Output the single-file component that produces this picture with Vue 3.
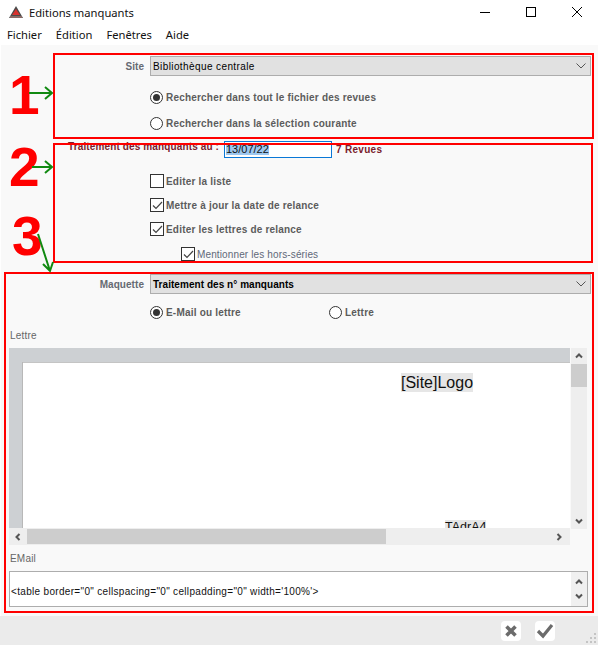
<template>
  <div class="window">
    <header class="titlebar">
      <svg class="app-icon" width="16" height="14" viewBox="0 0 16 14">
        <path d="M8 1 L15 13 H1 Z" fill="#4a4a4a" />
        <path d="M8 4 L12 10 H4 Z" fill="#d8322e" />
        <path d="M2 11 H14 V13 H2 Z" fill="#8a6a66" />
      </svg>
      <span class="title">Editions manquants</span>
      <div class="win-buttons">
        <svg width="12" height="12" viewBox="0 0 12 12"><path d="M1 6.5 H11" stroke="#000" fill="none" /></svg>
        <svg width="12" height="12" viewBox="0 0 12 12"><rect x="1.5" y="1.5" width="9" height="9" stroke="#000" fill="none" /></svg>
        <svg width="12" height="12" viewBox="0 0 12 12"><path d="M1 1 L11 11 M11 1 L1 11" stroke="#000" fill="none" /></svg>
      </div>
    </header>

    <nav class="menubar">
      <span v-for="item in menu" :key="item">{{ item }}</span>
    </nav>

    <main class="content">
      <div class="field-row site-row">
        <label class="field-label">Site</label>
        <div class="select">
          <span>Bibliothèque centrale</span>
          <svg width="10" height="6" viewBox="0 0 10 6"><path d="M0.5 0.5 L5 5 L9.5 0.5" stroke="#555" fill="none" /></svg>
        </div>
      </div>

      <div class="options site-options">
        <div class="option"><span class="radio on"></span>Rechercher dans tout le fichier des revues</div>
        <div class="option"><span class="radio"></span>Rechercher dans la sélection courante</div>
      </div>

      <div class="date-row">
        <span class="date-label">Traitement des manquants au :</span>
        <div class="date-input"><span>13/07/22</span></div>
        <span class="count">7 Revues</span>
      </div>

      <div class="checks">
        <div v-for="c in checks" :key="c.label" class="option">
          <span class="checkbox">
            <svg v-if="c.on" width="11" height="9" viewBox="0 0 11 9"><path d="M1 4.5 L4 7.5 L10 1" stroke="#444" stroke-width="1.2" fill="none" /></svg>
          </span>{{ c.label }}
        </div>
        <div class="option sub-option">
          <span class="checkbox">
            <svg width="11" height="9" viewBox="0 0 11 9"><path d="M1 4.5 L4 7.5 L10 1" stroke="#444" stroke-width="1.2" fill="none" /></svg>
          </span>Mentionner les hors-séries
        </div>
      </div>

      <div class="field-row maquette-row">
        <label class="field-label">Maquette</label>
        <div class="select strong">
          <span>Traitement des n° manquants</span>
          <svg width="10" height="6" viewBox="0 0 10 6"><path d="M0.5 0.5 L5 5 L9.5 0.5" stroke="#555" fill="none" /></svg>
        </div>
      </div>

      <div class="type-row">
        <div class="option type-a"><span class="radio on"></span>E-Mail ou lettre</div>
        <div class="option"><span class="radio"></span>Lettre</div>
      </div>

      <div class="section-label">Lettre</div>
      <div class="letter">
        <div class="letter-main">
          <div class="ruler-top"></div>
          <div class="letter-body">
            <div class="ruler-left"></div>
            <div class="page">
              <span class="tag tag-logo">[Site]Logo</span>
              <span class="tag tag-adr">TAdrA4</span>
            </div>
          </div>
          <div class="hscroll">
            <svg class="arrow" width="8" height="8" viewBox="0 0 8 8"><path d="M5.5 1 L2.5 4 L5.5 7" stroke="#555" stroke-width="2" fill="none" /></svg>
            <div class="htrack"><div class="hthumb"></div></div>
            <svg class="arrow" width="8" height="8" viewBox="0 0 8 8"><path d="M2.5 1 L5.5 4 L2.5 7" stroke="#555" stroke-width="2" fill="none" /></svg>
          </div>
        </div>
        <div class="vscroll">
          <svg class="arrow" width="8" height="8" viewBox="0 0 8 8"><path d="M1 5.5 L4 2.5 L7 5.5" stroke="#555" stroke-width="2" fill="none" /></svg>
          <div class="vtrack"><div class="vthumb"></div></div>
          <svg class="arrow" width="8" height="8" viewBox="0 0 8 8"><path d="M1 2.5 L4 5.5 L7 2.5" stroke="#555" stroke-width="2" fill="none" /></svg>
        </div>
      </div>

      <div class="section-label email-label">EMail</div>
      <div class="email">
        <div class="email-text">&lt;table border="0" cellspacing="0" cellpadding="0" width='100%'&gt;</div>
        <div class="email-scroll">
          <svg width="8" height="8" viewBox="0 0 8 8"><path d="M1 5.5 L4 2.5 L7 5.5" stroke="#555" stroke-width="2" fill="none" /></svg>
          <svg width="8" height="8" viewBox="0 0 8 8"><path d="M1 2.5 L4 5.5 L7 2.5" stroke="#555" stroke-width="2" fill="none" /></svg>
        </div>
      </div>
    </main>

    <footer class="footer">
      <button class="tool-btn">
        <svg width="14" height="14" viewBox="0 0 14 14"><path d="M2.5 2.5 L11.5 11.5 M11.5 2.5 L2.5 11.5" stroke="#6b6b6b" stroke-width="3.6" fill="none" /></svg>
      </button>
      <button class="tool-btn">
        <svg width="18" height="16" viewBox="0 0 18 16"><path d="M2 8 L7 13 L16 2" stroke="#6b6b6b" stroke-width="3.2" fill="none" /></svg>
      </button>
      <svg class="grip" width="14" height="14" viewBox="0 0 14 14">
        <g fill="#c4c4c4">
          <rect x="10" y="2" width="2" height="2" /><rect x="6" y="6" width="2" height="2" /><rect x="10" y="6" width="2" height="2" />
          <rect x="2" y="10" width="2" height="2" /><rect x="6" y="10" width="2" height="2" /><rect x="10" y="10" width="2" height="2" />
        </g>
      </svg>
    </footer>

    <!-- red annotations drawn over the screenshot -->
    <div class="mark box1"></div>
    <div class="mark box2"></div>
    <div class="mark box3"></div>
    <span class="num num1">1</span>
    <span class="num num2">2</span>
    <span class="num num3">3</span>
    <svg class="arrows" width="60" height="290" viewBox="0 0 60 290">
      <g stroke="#118a11" stroke-width="2" fill="none">
        <path d="M29 93 H52 M45 87 L52 93 L45 99" />
        <path d="M32 167 H52 M45 161 L52 167 L45 173" />
        <path d="M38 234 L50 271 M43 264 L50 271 L53 262" />
      </g>
    </svg>
  </div>
</template>

<script setup>
const menu = ['Fichier', 'Édition', 'Fenêtres', 'Aide']
const checks = [
  { label: 'Editer la liste', on: false },
  { label: 'Mettre à jour la date de relance', on: true },
  { label: 'Editer les lettres de relance', on: true }
]
</script>

<style>
html, body { margin: 0; background: #fff; }
</style>

<style scoped>
.window {
  position: relative;
  width: 598px;
  height: 645px;
  overflow: hidden;
  background: #fff;
  font-family: "Liberation Sans", Arial, sans-serif;
  font-size: 10px;
  color: #5c5c5c;
}

.titlebar {
  height: 24px;
  display: flex;
  align-items: center;
  padding-left: 8px;
}
.title {
  margin-left: 5px;
  font-family: "Noto Sans", sans-serif;
  font-size: 11.2px;
  color: #111;
}
.win-buttons {
  margin-left: auto;
  display: flex;
  gap: 34px;
  padding-right: 15px;
}

.menubar {
  height: 21px;
  display: flex;
  gap: 14px;
  padding-left: 7px;
  align-items: center;
  font-family: "Noto Sans", sans-serif;
  font-size: 11.2px;
  color: #111;
}

.content {
  height: 571px;
  margin-left: 1px;
  background: #f9f9f9;
  box-sizing: border-box;
  padding-top: 11px;
}

.field-row {
  display: flex;
  align-items: center;
  height: 20px;
}
.field-label {
  width: 143px;
  text-align: right;
  font-weight: bold;
  letter-spacing: 0.05px;
  color: #666a72;
}
.select {
  margin-left: 6px;
  width: 441px;
  height: 20px;
  box-sizing: border-box;
  background: #e1e1e1;
  border: 1px solid #adadad;
  display: flex;
  align-items: center;
  justify-content: space-between;
  padding: 0 4px 0 2px;
  color: #000;
  letter-spacing: 0.4px;
}
.select.strong { font-weight: bold; letter-spacing: 0.05px; }

.option {
  display: flex;
  align-items: center;
  font-weight: bold;
  letter-spacing: 0.2px;
  color: #5c5c5c;
  white-space: nowrap;
}
.radio {
  width: 11px;
  height: 11px;
  border: 1px solid #333;
  border-radius: 50%;
  margin-right: 3px;
  background: #fff;
  position: relative;
  flex: none;
}
.radio.on::after {
  content: "";
  position: absolute;
  left: 2px;
  top: 2px;
  width: 7px;
  height: 7px;
  border-radius: 50%;
  background: #333;
}
.checkbox {
  width: 12px;
  height: 12px;
  border: 1px solid #333;
  background: #fff;
  margin-right: 2px;
  display: flex;
  align-items: center;
  justify-content: center;
  flex: none;
}

.site-options {
  margin: 8px 0 0 149px;
}
.site-options .option { height: 26px; }

.date-row {
  margin-top: 5px;
  height: 17px;
  display: flex;
  align-items: flex-start;
  font-weight: bold;
  letter-spacing: 0.2px;
  color: #7a1c2c;
}
.date-label {
  margin: 0 0 0 67px;
  width: 156px;
  letter-spacing: 0.13px;
  white-space: nowrap;
}
.date-input {
  width: 108px;
  height: 17px;
  box-sizing: border-box;
  background: #fff;
  border: 1px solid #0a78d7;
  padding: 1px 1px 0;
  font-weight: normal;
  color: #111;
  letter-spacing: 0;
  font-size: 11px;
  line-height: 13px;
}
.date-input span { background: #9cc7ef; }
.count { margin: 3px 0 0 4px; letter-spacing: 0.3px; }

.checks {
  margin: 11px 0 0 149px;
}
.checks .option { height: 24px; }
.checks .sub-option {
  height: 26px;
  margin-left: 31px;
  font-weight: normal;
  color: #5f6878;
  letter-spacing: 0.13px;
}

.maquette-row { margin-top: 7px; }

.type-row {
  margin: 8px 0 0 149px;
  height: 20px;
  display: flex;
  align-items: center;
}
.type-a { width: 179px; }

.section-label {
  margin: 7px 0 0 9px;
  height: 14px;
  line-height: 14px;
  letter-spacing: 0.2px;
  color: #666;
}

.letter {
  margin: 5px 0 0 8px;
  width: 578px;
  height: 197px;
  display: flex;
}
.letter-main {
  width: 561px;
  display: flex;
  flex-direction: column;
}
.ruler-top {
  height: 14px;
  background: #cdd0d3;
  flex: none;
}
.letter-body {
  flex: 1;
  display: flex;
  min-height: 0;
}
.ruler-left {
  width: 14px;
  background: #cdd0d3;
  border-right: 1px solid #b8b8b8;
  box-sizing: border-box;
}
.page {
  flex: 1;
  background: #fff;
  border-top: 1px solid #c4c4c4;
  position: relative;
  overflow: hidden;
}
.tag {
  position: absolute;
  background: #e6e6e6;
  font-size: 16px;
  line-height: 19px;
  color: #111;
}
.tag-logo { left: 378px; top: 10px; }
.tag-adr { left: 422px; top: 157px; font-size: 12.5px; line-height: 15px; }

.hscroll {
  height: 17px;
  flex: none;
  background: #eee;
  display: flex;
  align-items: center;
}
.hscroll .arrow { margin: 0 5px; flex: none; }
.htrack { flex: 1; height: 15px; }
.hthumb { width: 359px; height: 15px; background: #cdcdcd; }
.hscroll .arrow:last-child { margin-left: -15px; margin-right: 7px; z-index: 1; position: relative; left: 0; }

.vscroll {
  width: 16px;
  margin-left: 1px;
  height: 181px;
  background: #eee;
  display: flex;
  flex-direction: column;
  align-items: center;
}
.vscroll .arrow { margin: 4px 0; flex: none; }
.vtrack { flex: 1; width: 100%; }
.vthumb { height: 23px; background: #cdcdcd; }

.email-label { margin-top: 7px; }

.email {
  margin: 5px 0 0 8px;
  width: 579px;
  height: 36px;
  box-sizing: border-box;
  border: 1px solid #adadad;
  background: #fff;
  display: flex;
}
.email-text {
  flex: 1;
  padding: 14px 0 0 1px;
  font-size: 10px;
  line-height: 12px;
  color: #111;
  letter-spacing: 0.32px;
  white-space: nowrap;
}
.email-scroll {
  width: 16px;
  background: #f0f0f0;
  display: flex;
  flex-direction: column;
  align-items: center;
  justify-content: space-between;
  padding: 6px 0;
  box-sizing: border-box;
}

.footer {
  height: 29px;
  background: #ebebeb;
  display: flex;
  align-items: center;
  justify-content: flex-end;
  gap: 14px;
  padding-right: 43px;
  position: relative;
}
.tool-btn {
  width: 20px;
  height: 20px;
  padding: 0;
  border: none;
  border-radius: 4px;
  background: #fff;
  display: flex;
  align-items: center;
  justify-content: center;
}
.grip { position: absolute; right: 0; bottom: 0; }

.mark {
  position: absolute;
  border: 2px solid #f00;
  box-sizing: border-box;
}
.box1 { left: 53px; top: 53px; width: 541px; height: 86px; }
.box2 { left: 53px; top: 143px; width: 540px; height: 120px; }
.box3 { left: 4px; top: 272px; width: 590px; height: 341px; }

.num {
  position: absolute;
  font-weight: bold;
  font-size: 55px;
  line-height: 56px;
  color: #f00;
}
.num1 { left: 9px; top: 67px; }
.num2 { left: 9px; top: 139px; }
.num3 { left: 12px; top: 208px; }

.arrows { position: absolute; left: 0; top: 0; }
</style>
